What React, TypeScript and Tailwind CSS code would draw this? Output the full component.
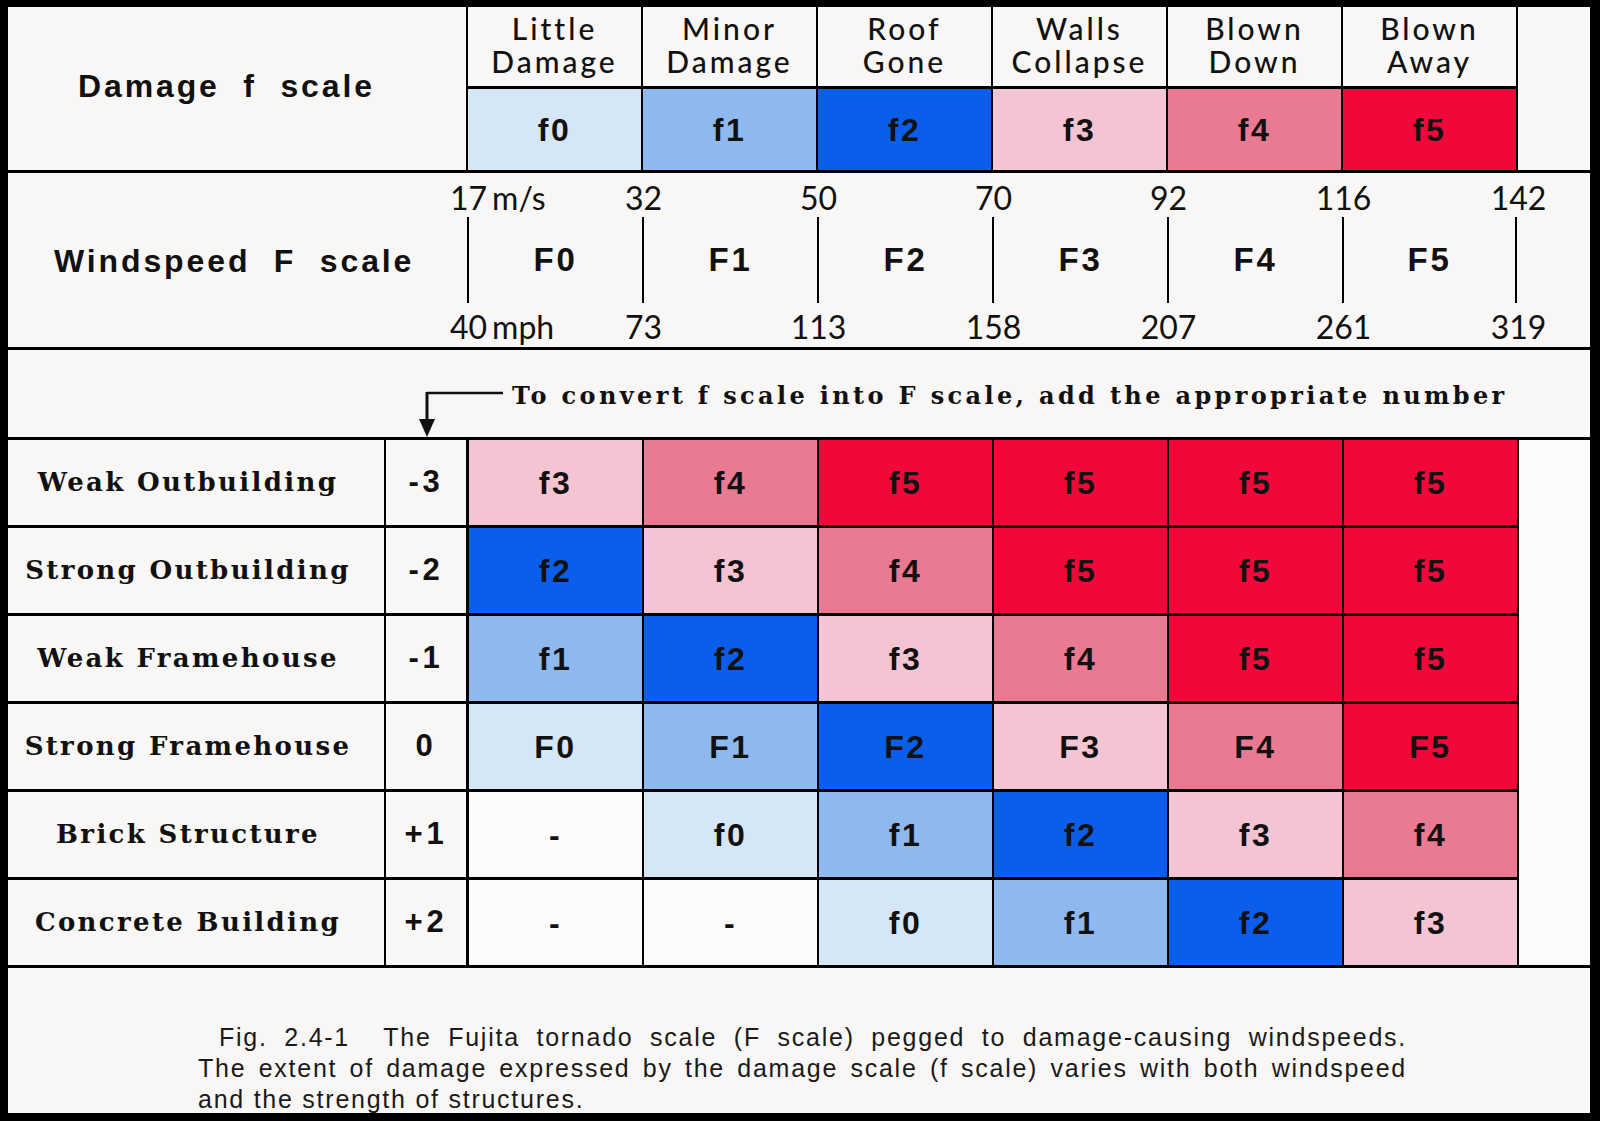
import React from 'react';

const COLORS = [
  'bg-[#d5e6f7]',
  'bg-[#8db9ee]',
  'bg-[#0a5eea]',
  'bg-[#f4c4d2]',
  'bg-[#ea7992]',
  'bg-[#f1083a]',
];

const HEADERS: [string, string][] = [
  ['Little', 'Damage'],
  ['Minor', 'Damage'],
  ['Roof', 'Gone'],
  ['Walls', 'Collapse'],
  ['Blown', 'Down'],
  ['Blown', 'Away'],
];

const TOP: [string, string?][] = [['17', 'm/s'], ['32'], ['50'], ['70'], ['92'], ['116'], ['142']];
const BOTTOM: [string, string?][] = [['40', 'mph'], ['73'], ['113'], ['158'], ['207'], ['261'], ['319']];

const ROWS: [string, string, string[]][] = [
  ['Weak Outbuilding', '-3', ['f3', 'f4', 'f5', 'f5', 'f5', 'f5']],
  ['Strong Outbuilding', '-2', ['f2', 'f3', 'f4', 'f5', 'f5', 'f5']],
  ['Weak Framehouse', '-1', ['f1', 'f2', 'f3', 'f4', 'f5', 'f5']],
  ['Strong Framehouse', '0', ['F0', 'F1', 'F2', 'F3', 'F4', 'F5']],
  ['Brick Structure', '+1', ['-', 'f0', 'f1', 'f2', 'f3', 'f4']],
  ['Concrete Building', '+2', ['-', '-', 'f0', 'f1', 'f2', 'f3']],
];

const SANS = "font-['Liberation_Sans',Arial,sans-serif]";
const SERIF = "font-['DejaVu_Serif','Liberation_Serif',serif]";
const GEO = "font-['Lato','Liberation_Sans',sans-serif]";

function levelOf(v: string): number {
  if (v === '-') return -1;
  return parseInt(v.slice(1), 10);
}

function NumberRow({ items, pad, lead }: { items: [string, string?][]; pad: string; lead: string }) {
  return (
    <div className={`flex ${pad} overflow-hidden`}>
      <div className="w-[373px] shrink-0" />
      {items.map(([n, unit], i) => (
        <div key={i} className={`w-[175px] shrink-0 text-center text-[32px] ${lead} ${GEO} font-normal whitespace-nowrap`}>
          {n}
          {unit ? (
            <span className="inline-block w-0 whitespace-nowrap text-left">
              <span className="ml-[5px]">{unit}</span>
            </span>
          ) : null}
        </div>
      ))}
    </div>
  );
}

export default function App() {
  return (
    <div className="w-[1600px] h-[1121px] bg-black pt-[7px] pl-[8px] pr-[10px] pb-[8px]">
      <div className="w-full h-full bg-[#f8f7f5] flex flex-col overflow-hidden text-[#111]">
        {/* Damage f scale */}
        <div className="h-[166px] shrink-0 flex border-b-[3px] border-black">
          <div className="w-[460px] shrink-0 border-r-2 border-black flex items-center pl-[70px] pb-[5px]">
            <span className={`${SANS} font-bold text-[32px] tracking-[0.09em] whitespace-pre`}>Damage  f  scale</span>
          </div>
          {HEADERS.map(([a, b], i) => (
            <div key={i} className="w-[175px] shrink-0 border-r-2 border-black flex flex-col">
              <div className={`h-[82px] shrink-0 border-b-[3px] border-black flex flex-col items-center justify-center pb-[4px] ${GEO} font-medium text-[30px] leading-[33px] tracking-[0.1em]`}>
                <span>{a}</span>
                <span>{b}</span>
              </div>
              <div className={`flex-1 ${COLORS[i]} flex items-center justify-center ${SANS} font-bold text-[32px] tracking-[0.08em]`}>
                f{i}
              </div>
            </div>
          ))}
          <div className="flex-1" />
        </div>

        {/* Windspeed F scale */}
        <div className="h-[177px] shrink-0 flex flex-col border-b-[3px] border-black">
          <div className="h-[44px] shrink-0">
            <NumberRow items={TOP} pad="pt-[6px]" lead="leading-[38px]" />
          </div>
          <div className="h-[86px] shrink-0 flex">
            <div className="w-[459px] shrink-0 flex items-center pl-[46px] pt-[2px]">
              <span className={`${SANS} font-bold text-[32px] tracking-[0.09em] whitespace-pre`}>Windspeed  F  scale</span>
            </div>
            {[0, 1, 2, 3, 4, 5].map((i) => (
              <div
                key={i}
                className={`w-[175px] shrink-0 border-l-2 ${i === 5 ? 'border-r-2' : ''} border-black flex items-center justify-center ${SANS} font-bold text-[33px] tracking-[0.08em]`}
              >
                F{i}
              </div>
            ))}
          </div>
          <div className="flex-1">
            <NumberRow items={BOTTOM} pad="pt-[6px]" lead="leading-[36px]" />
          </div>
        </div>

        {/* conversion note */}
        <div className="h-[90px] shrink-0 flex items-start border-b-[3px] border-black">
          <div className="w-[410px] shrink-0" />
          <svg width="92" height="87" viewBox="0 0 92 87" className="shrink-0">
            <line x1="9" y1="43" x2="85" y2="43" stroke="#111" strokeWidth="2.5" />
            <line x1="9" y1="42" x2="9" y2="72" stroke="#111" strokeWidth="3" />
            <polygon points="1,69 17,69 9,87" fill="#111" />
          </svg>
          <div className={`ml-[2px] pt-[32px] ${SERIF} font-bold text-[24px] leading-[28px] tracking-[0.14em] whitespace-nowrap`}>
            To convert f scale into F scale, add the appropriate number
          </div>
        </div>

        {/* table */}
        <div className="shrink-0 flex border-b-[3px] border-black">
          <div className="w-[1511px] shrink-0 flex flex-col">
            {ROWS.map(([label, adj, cells], r) => (
              <div
                key={r}
                className={`${r === ROWS.length - 1 ? 'h-[85px]' : 'h-[88px] border-b-[3px] border-black'} shrink-0 flex`}
              >
                <div className="w-[378px] shrink-0 border-r-2 border-black flex items-center justify-center pr-[16px]">
                  <span className={`${SERIF} font-bold text-[26px] tracking-[0.09em] whitespace-nowrap`}>{label}</span>
                </div>
                <div className={`w-[83px] shrink-0 border-r-[3px] border-black flex items-center justify-center ${SANS} font-bold text-[31px] tracking-[0.12em]`}>
                  {adj}
                </div>
                {cells.map((c, i) => {
                  const lv = levelOf(c);
                  return (
                    <div
                      key={i}
                      className={`w-[175px] shrink-0 border-r-2 border-black flex items-center justify-center ${lv >= 0 ? COLORS[lv] : 'bg-[#fbfbfa]'} ${SANS} font-bold text-[32px] tracking-[0.08em]`}
                    >
                      {c}
                    </div>
                  );
                })}
              </div>
            ))}
          </div>
          <div className="flex-1 bg-[#fbfbfa]" />
        </div>

        {/* caption */}
        <div className={`flex-1 pt-[54px] pl-[190px] ${SANS} text-[25px] leading-[31px] tracking-[0.07em] text-[#1a1a1a]`}>
          <div className="w-[1209px]">
            <div className="pl-[21px] text-justify [text-align-last:justify] whitespace-nowrap">
              Fig. 2.4-1 &nbsp;The Fujita tornado scale (F scale) pegged to damage-causing windspeeds.
            </div>
            <div className="text-justify [text-align-last:justify] whitespace-nowrap">
              The extent of damage expressed by the damage scale (f scale) varies with both windspeed
            </div>
            <div className="whitespace-nowrap">and the strength of structures.</div>
          </div>
        </div>
      </div>
    </div>
  );
}
